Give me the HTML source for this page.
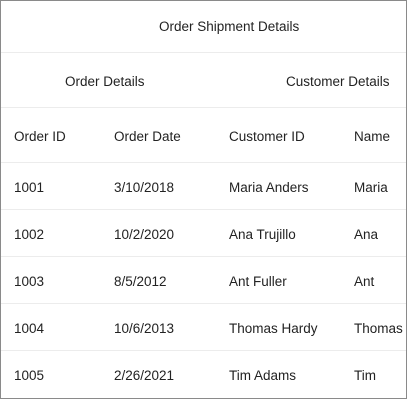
<!DOCTYPE html>
<html><head><style>
body{margin:0;background:#fff;font-family:"Liberation Sans",sans-serif;font-size:13.5px;color:#222}
.f{position:absolute;left:0;top:0;width:405px;height:397px;border:1px solid #8a8a8a;overflow:hidden}
.l{position:absolute;left:0;width:405px;height:1px;background:#ececec}
.t{position:absolute;white-space:nowrap;line-height:16px}
</style></head><body><div class="f">
<div class="t" style="left:158px;top:18px">Order Shipment Details</div>
<div class="l" style="top:51px"></div>
<div class="t" style="left:64px;top:73px">Order Details</div>
<div class="t" style="left:285px;top:73px">Customer Details</div>
<div class="l" style="top:106px"></div>
<div class="t" style="left:13px;top:128px">Order ID</div>
<div class="t" style="left:113px;top:128px">Order Date</div>
<div class="t" style="left:228px;top:128px">Customer ID</div>
<div class="t" style="left:353px;top:128px">Name</div>
<div class="l" style="top:161px"></div>
<div class="t" style="left:13px;top:179px">1001</div><div class="t" style="left:113px;top:179px">3/10/2018</div><div class="t" style="left:228px;top:179px">Maria Anders</div><div class="t" style="left:353px;top:179px">Maria</div>
<div class="l" style="top:208px"></div>
<div class="t" style="left:13px;top:226px">1002</div><div class="t" style="left:113px;top:226px">10/2/2020</div><div class="t" style="left:228px;top:226px">Ana Trujillo</div><div class="t" style="left:353px;top:226px">Ana</div>
<div class="l" style="top:255px"></div>
<div class="t" style="left:13px;top:273px">1003</div><div class="t" style="left:113px;top:273px">8/5/2012</div><div class="t" style="left:228px;top:273px">Ant Fuller</div><div class="t" style="left:353px;top:273px">Ant</div>
<div class="l" style="top:302px"></div>
<div class="t" style="left:13px;top:320px">1004</div><div class="t" style="left:113px;top:320px">10/6/2013</div><div class="t" style="left:228px;top:320px">Thomas Hardy</div><div class="t" style="left:353px;top:320px">Thomas</div>
<div class="l" style="top:349px"></div>
<div class="t" style="left:13px;top:367px">1005</div><div class="t" style="left:113px;top:367px">2/26/2021</div><div class="t" style="left:228px;top:367px">Tim Adams</div><div class="t" style="left:353px;top:367px">Tim</div>
</div></body></html>
